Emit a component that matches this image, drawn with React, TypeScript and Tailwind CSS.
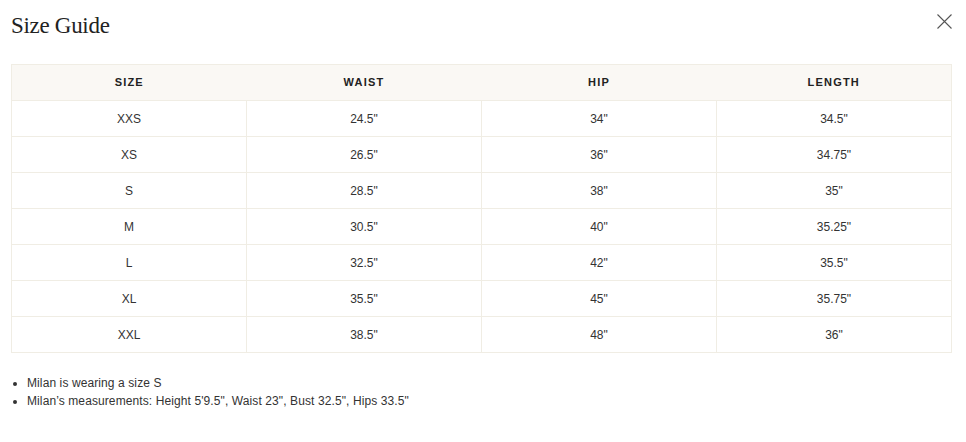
const rows = [
  ["XXS", "24.5\"", "34\"", "34.5\""],
  ["XS", "26.5\"", "36\"", "34.75\""],
  ["S", "28.5\"", "38\"", "35\""],
  ["M", "30.5\"", "40\"", "35.25\""],
  ["L", "32.5\"", "42\"", "35.5\""],
  ["XL", "35.5\"", "45\"", "35.75\""],
  ["XXL", "38.5\"", "48\"", "36\""],
];

const heads = ["Size", "Waist", "Hip", "Length"];

export default function App() {
  return (
    <div className="w-[966px] h-[442px] bg-white px-[11px] pt-[11px] font-['Liberation_Sans',Arial,sans-serif] text-[#333]">
      {/* header */}
      <div className="flex items-start justify-between h-[53px]">
        <h2 className="font-['Liberation_Serif',serif] text-[23px] leading-[30px] text-[#222] tracking-[-0.3px]">
          Size Guide
        </h2>
        <button className="mt-[3px] mr-[3px] text-[#555]">
          <svg width="15" height="15" viewBox="0 0 15 15" fill="none" stroke="currentColor" strokeWidth="1.1">
            <path d="M0.5 0.5L14.5 14.5M14.5 0.5L0.5 14.5" />
          </svg>
        </button>
      </div>

      {/* table */}
      <table className="w-[941px] border-collapse table-fixed">
        <thead>
          <tr className="bg-[#faf8f4]">
            {heads.map((h) => (
              <th
                key={h}
                className="h-[36px] border border-[#f0ede4] border-x-0 first:border-l last:border-r text-[11px] font-bold uppercase tracking-[1.2px] text-[#222]"
              >
                {h}
              </th>
            ))}
          </tr>
        </thead>
        <tbody>
          {rows.map((r) => (
            <tr key={r[0]}>
              {r.map((c, i) => (
                <td
                  key={i}
                  className="h-[36px] border border-[#f0ede4] text-center text-[12px] text-[#333]"
                >
                  {c}
                </td>
              ))}
            </tr>
          ))}
        </tbody>
      </table>

      {/* notes */}
      <ul className="mt-[21px] list-disc pl-[16px] text-[12px] tracking-[0.1px] leading-[18px] text-[#333]">
        <li>Milan is wearing a size S</li>
        <li>Milan’s measurements: Height 5'9.5", Waist 23", Bust 32.5", Hips 33.5"</li>
      </ul>
    </div>
  );
}
